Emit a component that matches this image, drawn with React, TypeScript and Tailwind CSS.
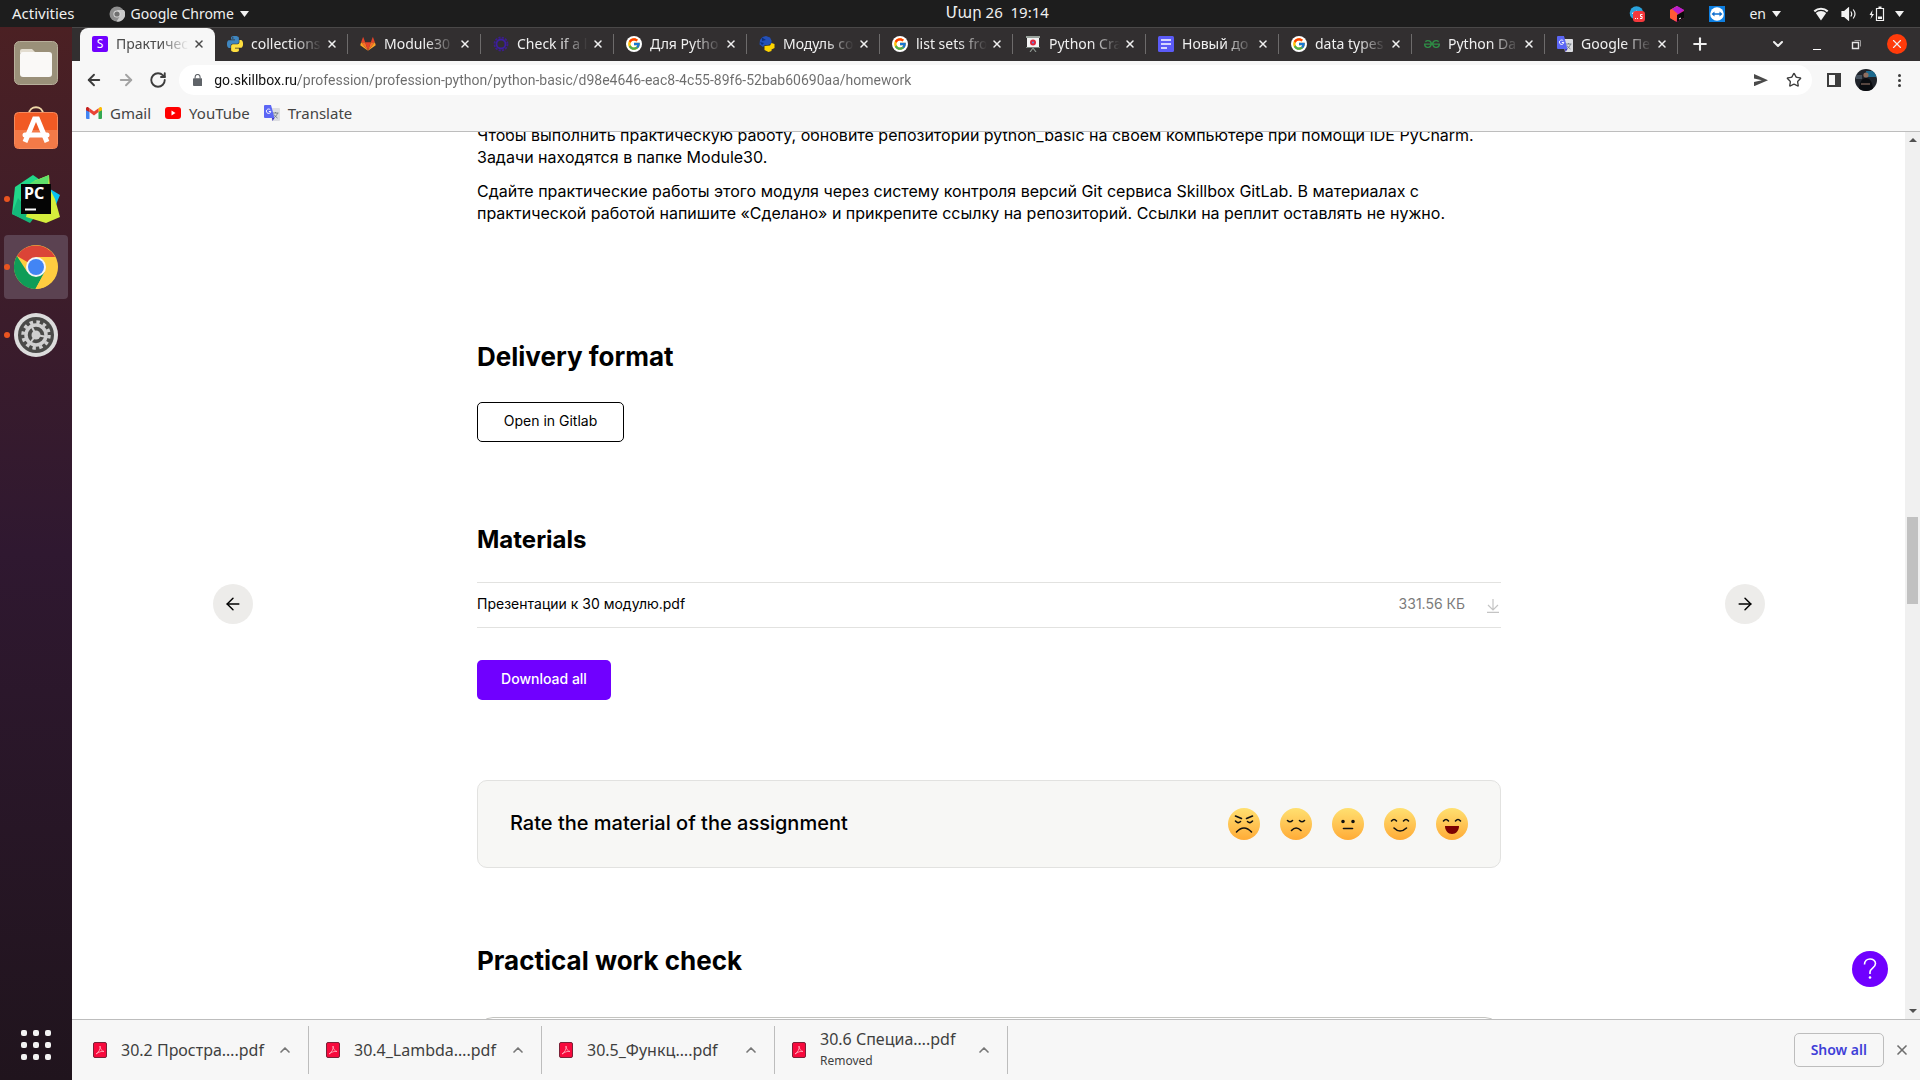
import type { ReactNode } from "react";
import { FcGoogle } from "react-icons/fc";
import { SiGeeksforgeeks } from "react-icons/si";
import { ArrowLeft, ArrowRight, ChevronDown, ChevronUp, Plus, RotateCw, Star, X } from "lucide-react";

/* ---------- small marks ---------- */

const PY_TOP =
  "M14.25.18l.9.2.73.26.59.3.45.32.34.34.25.34.16.33.1.3.04.26.02.2-.01.13V8.5l-.05.63-.13.55-.21.46-.26.38-.3.31-.33.25-.35.19-.35.14-.33.1-.3.07-.26.04-.21.02H8.77l-.69.05-.59.14-.5.22-.41.27-.33.32-.27.35-.2.36-.15.37-.1.35-.07.32-.04.27-.02.21v3.06H3.17l-.21-.03-.28-.07-.32-.12-.35-.18-.36-.26-.36-.36-.35-.46-.32-.59-.28-.73-.21-.88-.14-1.05-.05-1.23.06-1.22.16-1.04.24-.87.32-.71.36-.57.4-.44.42-.33.42-.24.4-.16.36-.1.32-.05.24-.01h.16l.06.01h8.16v-.83H6.18l-.01-2.75-.02-.37.05-.34.11-.31.17-.28.25-.26.31-.23.38-.2.44-.18.51-.15.58-.12.64-.1.71-.06.77-.04.84-.02 1.27.05zm-6.3 1.98l-.23.33-.08.41.08.41.23.34.33.22.41.09.41-.09.33-.22.23-.34.08-.41-.08-.41-.23-.33-.33-.22-.41-.09-.41.09z";
const PY_BOTTOM =
  "M21.04 6.11l.28.06.32.12.35.18.36.27.36.35.35.47.32.59.28.73.21.88.14 1.04.05 1.23-.06 1.23-.16 1.04-.24.86-.32.71-.36.57-.4.45-.42.33-.42.24-.4.16-.36.09-.32.05-.24.02-.16-.01h-8.22v.82h5.84l.01 2.76.02.36-.05.34-.11.31-.17.29-.25.25-.31.24-.38.2-.44.17-.51.15-.58.13-.64.09-.71.07-.77.04-.84.01-1.27-.04-1.07-.14-.9-.2-.73-.25-.59-.3-.45-.33-.34-.34-.25-.34-.16-.33-.1-.3-.04-.25-.02-.2.01-.13v-5.34l.05-.64.13-.54.21-.46.26-.38.3-.32.33-.24.35-.2.35-.14.33-.1.3-.06.26-.04.21-.02.13-.01h5.84l.69-.05.59-.14.5-.21.41-.28.33-.32.27-.35.2-.36.15-.36.1-.35.07-.32.04-.28.02-.21V6.07h2.09l.14.01z";

const PythonMark = () => (
  <svg viewBox="0 0 24 24" className="size-4">
    <path d={PY_TOP} fill="#3f86bf" />
    <path d={PY_BOTTOM} fill="#ffdf3f" />
  </svg>
);

const PythonClubMark = () => (
  <svg viewBox="0 0 16 16" className="size-4">
    <path d="M1 4 3.500 1 7 0l4 1.500 1.500 3v3L9 9H6L4 11 .5 8.500Z" fill="#2450b8" />
    <path d="M3 1.500 7 4 3 5ZM1 6l4 1-2 2Z" fill="#0b2f7d" />
    <path d="M5.500 10 11 9.500l1.500-2.500 3 1V12l-3 1.500V15l-3 1-4-2Z" fill="#ffd500" />
  </svg>
);

const GitlabMark = () => (
  <svg viewBox="0 0 18 16" className="h-4 w-4.5">
    <path d="M9 15.500 12.200 6H5.800Z" fill="#e24329" />
    <path d="M9 15.500 5.800 6H1.300ZM9 15.500 12.200 6h4.500Z" fill="#fc6d26" />
    <path d="M1.300 6 .4 8.900c-.1.300 0 .6.200.8L9 15.500ZM16.700 6l.9 2.900c.1.300 0 .6-.2.800L9 15.500Z" fill="#fca326" />
    <path d="M1.300 6h4.500L3.900.7c-.1-.3-.6-.3-.7 0ZM16.700 6h-4.500L14.100.7c.1-.3.600-.3.700 0Z" fill="#e24329" />
  </svg>
);

const SkillboxMark = () => (
  <span className="flex size-4 items-center justify-center rounded-xs bg-[#7000ff] text-xs text-white">S</span>
);

const GearMark = () => (
  <svg viewBox="0 0 16 16" className="size-4" fill="none">
    <circle cx="8" cy="8" r="4.500" stroke="#3c1fa0" strokeWidth="1.800" />
    <circle cx="8" cy="8" r="6.500" stroke="#3c1d8c" strokeWidth="1.800" strokeDasharray="2.200 1.200" />
  </svg>
);

const GoogleMark = () => (
  <span className="flex size-4 items-center justify-center rounded-full bg-white">
    <FcGoogle className="size-3.5" />
  </span>
);

const BoardMark = () => (
  <svg viewBox="0 0 16 16" className="size-4">
    <path d="M1 0h14v2H1z" fill="#9aa39d" />
    <path d="M2 2h12v9H2z" fill="#f4f4f4" />
    <path d="M1 11h14v1H1z" fill="#7b837d" />
    <circle cx="8" cy="6.500" r="3" fill="#e0263c" />
    <circle cx="8" cy="6.500" r="1" fill="#5b8fe8" />
    <path d="m8 12-3 4M8 12l3 4" stroke="#8c948e" strokeWidth="1.200" />
  </svg>
);

const DocsMark = () => (
  <svg viewBox="0 0 16 16" className="size-4">
    <rect width="16" height="16" rx="1.500" fill="#5b5bf7" />
    <path d="M3 4h10M3 8h10M3 12h6" stroke="#fff" strokeWidth="1.600" />
  </svg>
);

const TranslateMark = () => (
  <svg viewBox="0 0 16 16" className="size-4">
    <path d="M6 3h9a1 1 0 0 1 1 1v11a1 1 0 0 1-1 1H8Z" fill="#dcdde1" />
    <path d="M8.500 8h6M11.500 7v1M13.500 8c-.5 2-2 4-4 5M10 9.500c.800 1.500 2 2.500 3.500 3.500" stroke="#6f7a85" strokeWidth=".9" fill="none" />
    <path d="M1 0h6l3.500 13H1a1 1 0 0 1-1-1V1a1 1 0 0 1 1-1Z" fill="#5b66f5" />
    <path d="M8 13h2.500L8.500 16Z" fill="#3b2fc0" />
    <path d="M6.300 4.800A2.200 2.200 0 1 0 6.800 6.500H4.800" stroke="#fff" strokeWidth="1" fill="none" />
  </svg>
);

const GmailMark = () => (
  <svg viewBox="0 0 16 12" className="w-4">
    <path d="M0 2v9a1 1 0 0 0 1 1h2.500V4.500Z" fill="#4285f4" />
    <path d="M16 2v9a1 1 0 0 1-1 1h-2.500V4.500Z" fill="#34a853" />
    <path d="M12.500 1.200V5L16 3.200V1.500C16 .2 14.500-.4 13.500.4Z" fill="#fbbc04" />
    <path d="M3.500 5V1.200L8 4.600l4.500-3.400V5L8 8.400Z" fill="#ea4335" />
    <path d="M0 1.500v1.700L3.500 5V1.200L2.500.4C1.500-.4 0 .2 0 1.500Z" fill="#c5221f" />
  </svg>
);

const YoutubeMark = () => (
  <svg viewBox="0 0 16 12" className="w-4">
    <rect width="16" height="12" rx="3" fill="#f00" />
    <path d="m6.500 3.500 4 2.500-4 2.500Z" fill="#fff" />
  </svg>
);

const Caret = () => (
  <svg viewBox="0 0 9 6" className="w-[9px] shrink-0">
    <path d="M0 0h9L4.500 6Z" fill="#f2f2f2" />
  </svg>
);

/* ---------- system bar ---------- */

function SystemBar() {
  return (
    <header className="flex h-[27px] shrink-0 items-center bg-[#1d1d1d] text-sm text-[#f0f0f0]">
      <button className="ml-3 text-[15px]">Activities</button>
      <button className="ml-[34px] flex flex-1 items-center gap-1.5">
        <svg viewBox="0 0 16 16" className="size-4">
          <circle cx="8" cy="8" r="7.500" fill="#8e8e8e" />
          <path d="M8 4h7a7.500 7.500 0 0 1-7.500 11.500L11 10Z" fill="#c9c9c9" />
          <circle cx="8" cy="8" r="3.600" fill="#d9d9d9" />
          <circle cx="8" cy="8" r="2.600" fill="#707070" />
        </svg>
        Google Chrome
        <Caret />
      </button>
      <time className="pb-0.5 text-[15px] whitespace-pre">Մար 26  19:14</time>
      <div className="ml-[18px] flex flex-1 items-center justify-end pr-4">
        <svg viewBox="0 0 16 16" className="mr-6 size-4">
          <circle cx="7.500" cy="7" r="6.800" fill="#2aa3dd" />
          <path d="M3 7.500 8 5" stroke="#fff" />
          <rect x="4" y="5" width="12" height="11" rx="3" fill="#f5383c" />
          <path d="M6 12.500h1M8 12.500h1M13.500 8.500h-2v2h1.600v2H11" stroke="#fff" fill="none" />
        </svg>
        <svg viewBox="0 0 16 16" className="mr-6 size-4">
          <path d="m8 0 7 4v8l-7 4-7-4V4Z" fill="#e0218a" />
          <path d="m1 4 7-4 1 7-2 8.500L1 12Z" fill="#ff5a36" />
          <path d="m8 0 7 4-6 4-6-5Z" fill="#b81fd0" />
          <path d="m15 5v7l-7 4V9Z" fill="#0a0a0a" />
          <path d="m10 13 2-1" stroke="#fff" />
        </svg>
        <svg viewBox="0 0 16 16" className="mr-6 size-4">
          <rect width="16" height="16" fill="#0e7fe1" />
          <circle cx="8" cy="8" r="6.800" fill="#fff" />
          <path d="m2.500 8 3-2.500v1.700h5V5.500l3 2.500-3 2.500V8.800h-5v1.700Z" fill="#0e6fd0" />
        </svg>
        <button className="mr-8 flex items-center gap-1.5">
          en
          <Caret />
        </button>
        <button aria-label="System menu" className="flex items-center">
          <svg viewBox="0 0 16 14" className="mr-3 w-4">
            <path d="M.6 3.500a11 11 0 0 1 14.800 0L14 5.300a8.500 8.500 0 0 0-12 0Z" fill="#f2f2f2" />
            <path d="M2.800 6.100a7.800 7.800 0 0 1 10.400 0L8 13.500Z" fill="#f2f2f2" />
          </svg>
          <svg viewBox="0 0 16 14" className="mr-3 w-4" fill="none" stroke="#f2f2f2" strokeWidth="1.200">
            <path d="M1 4.500h2.500L7.500 1v12L3.500 9.500H1Z" fill="#f2f2f2" />
            <path d="M9.800 4.500q1.800 2.500 0 5M12.200 2.500q3.600 4.500 0 9" />
          </svg>
          <svg viewBox="0 0 16 16" className="mr-2.5 size-4">
            <path d="M3.500 4 .5 9H2.500l-1 4 3.500-5H3Z" fill="#f2f2f2" />
            <path d="M7.500 2.500h7v12h-7z" fill="none" stroke="#f2f2f2" strokeWidth="1.200" />
            <path d="M9.500.500h3v2h-3zM9 10.500h4V13H9z" fill="#f2f2f2" />
          </svg>
          <Caret />
        </button>
      </div>
    </header>
  );
}

/* ---------- dock ---------- */

const FilesIcon = () => (
  <svg viewBox="0 0 44 44" className="size-11">
    <rect x=".5" y=".5" width="43" height="43" rx="5" fill="#9a9079" stroke="#b8af9b" />
    <path d="M6 10a2 2 0 0 1 2-2h10l4 4H6Z" fill="#e3ddd0" />
    <rect x="6" y="11" width="32" height="25" rx="3" fill="#faf9f7" />
  </svg>
);

const SoftwareIcon = () => (
  <svg viewBox="0 4 44 44" className="size-11 overflow-visible">
    <path d="M15 9c0-9 14-9 14 0" fill="none" stroke="#f0d8a8" strokeWidth="1.800" />
    <rect x=".5" y="7.500" width="43" height="36" rx="4" fill="#f15a24" stroke="#f58a5d" />
    <path d="M1 25h42v14a4 4 0 0 1-4 4H5a4 4 0 0 1-4-4Z" fill="#f37a48" />
    <path d="m11 37 9.500-23h3L33 37" fill="none" stroke="#fff" strokeWidth="5" />
    <path d="M11 30h22" stroke="#fff" strokeWidth="5" strokeLinecap="round" />
  </svg>
);

const PycharmIcon = () => (
  <svg viewBox="0 0 48 48" className="size-12">
    <path d="M3 12 21 0l10 7-13 40L0 39Z" fill="#21d789" />
    <path d="m0 39 6-16 16 20-4 5Z" fill="#14b87a" />
    <path d="m38 14 10 6-5 12-9-4Z" fill="#07c3f2" />
    <path d="m22 6 15-6 1 14 5 10 5 18-14 6-20-6Z" fill="#d5ee3c" />
    <path d="M20 7 37 0l-1 12H14Z" fill="#5fe06a" />
    <rect x="9" y="9" width="30" height="30" fill="#050505" />
    <path d="M13 34.500h11" stroke="#fff" strokeWidth="2" />
    <text x="12" y="24" fontSize="16" fontWeight="700" fill="#fff" fontFamily="Noto Sans, sans-serif">
      PC
    </text>
  </svg>
);

const ChromeIcon = () => (
  <svg viewBox="0 0 44 44" className="size-11">
    <circle cx="22" cy="22" r="22" fill="#ffcd40" />
    <path d="M22 22 2.900 11A22 22 0 0 1 41.100 12H22Z" fill="#db4437" />
    <path d="M2.900 11A22 22 0 0 0 21.500 44l9.200-17L13.300 27Z" fill="#0f9d58" />
    <path d="M22 12h19A22 22 0 0 1 21.500 44l9.200-17Z" fill="#ffcd40" />
    <circle cx="22" cy="22" r="10" fill="#f5f5f5" />
    <circle cx="22" cy="22" r="8" fill="#4285f4" />
  </svg>
);

const SettingsIcon = () => (
  <svg viewBox="0 0 44 44" className="size-11">
    <circle cx="22" cy="22" r="22" fill="#dcdcdc" />
    <circle cx="22" cy="22" r="18" fill="#4a4a48" />
    <circle cx="22" cy="22" r="13" fill="none" stroke="#cfcfcf" strokeWidth="3.500" strokeDasharray="3.400 3.407" />
    <circle cx="22" cy="22" r="10" fill="none" stroke="#cfcfcf" strokeWidth="3.500" />
    <circle cx="22" cy="22" r="4.500" fill="#cfcfcf" />
    <path d="m22 22 8.500 1.500M22 22l-5.500 7.500M22 22l-4-8" stroke="#cfcfcf" strokeWidth="2" />
  </svg>
);

const dockItems: { name: string; icon: ReactNode; running: boolean; active: boolean }[] = [
  { name: "Files", icon: <FilesIcon />, running: false, active: false },
  { name: "Ubuntu Software", icon: <SoftwareIcon />, running: false, active: false },
  { name: "PyCharm", icon: <PycharmIcon />, running: true, active: false },
  { name: "Google Chrome", icon: <ChromeIcon />, running: true, active: true },
  { name: "Settings", icon: <SettingsIcon />, running: true, active: false },
];

function Dock() {
  return (
    <nav className="flex w-[72px] shrink-0 flex-col items-center bg-linear-to-b from-[#4b2023] via-[#2f1830] to-[#20141d] pt-1">
      <div className="flex flex-col gap-1">
        {dockItems.map((item) => (
          <button
            key={item.name}
            aria-label={item.name}
            className={
              item.active
                ? "relative flex size-16 items-center justify-center rounded-sm bg-[#5b4251]"
                : "relative flex size-16 items-center justify-center rounded-sm"
            }
          >
            {item.running && <span className="absolute left-0 size-1.5 rounded-full bg-[#e95420]" />}
            {item.icon}
          </button>
        ))}
      </div>
      <button aria-label="Show applications" className="mt-auto mb-5 grid grid-cols-3 gap-1.5">
        {Array.from({ length: 9 }, (_, i) => (
          <span key={i} className="size-1.5 rounded-xs bg-[#f3f3f3]" />
        ))}
      </button>
    </nav>
  );
}

/* ---------- browser chrome ---------- */

const tabs: { title: string; icon: ReactNode }[] = [
  { title: "Практичес", icon: <SkillboxMark /> },
  { title: "collections", icon: <PythonMark /> },
  { title: "Module30", icon: <GitlabMark /> },
  { title: "Check if a l", icon: <GearMark /> },
  { title: "Для Pytho", icon: <GoogleMark /> },
  { title: "Модуль co", icon: <PythonClubMark /> },
  { title: "list sets fro", icon: <GoogleMark /> },
  { title: "Python Cra", icon: <BoardMark /> },
  { title: "Новый до", icon: <DocsMark /> },
  { title: "data types", icon: <GoogleMark /> },
  { title: "Python Da", icon: <SiGeeksforgeeks className="size-4 text-[#2f8d46]" /> },
  { title: "Google Пе", icon: <TranslateMark /> },
];

function TabStrip() {
  return (
    <div className="flex h-[34px] shrink-0 border-t border-[#4a4848] bg-[#322f30] pl-2 text-[#f0f0f0]">
      {tabs.map((tab, i) => (
        <div
          key={tab.title}
          className={
            i === 0
              ? "relative flex w-[135px] shrink-0 items-center rounded-t-lg bg-[#f7f7f7] pr-2 pb-0.5 pl-3 text-[#4a4a4a]"
              : "relative flex w-[133px] shrink-0 items-center pr-2 pb-0.5 pl-3"
          }
        >
          <button className="flex min-w-0 flex-1 items-center gap-2 text-left text-sm">
            <span className="flex w-4 shrink-0 justify-center">{tab.icon}</span>
            <span className="flex-1 overflow-hidden whitespace-nowrap [mask-image:linear-gradient(to_right,black_60%,transparent)]">
              {tab.title}
            </span>
          </button>
          <button aria-label={"Close tab " + tab.title} className="ml-0.5 p-0.5">
            <X className="size-3" strokeWidth={3} />
          </button>
          {i > 0 && <span className="absolute top-1.5 right-0 h-5 w-px bg-[#6d6b6b]" />}
        </div>
      ))}
      <button aria-label="New tab" className="ml-3 self-center pb-0.5">
        <Plus className="size-5" strokeWidth={2.5} />
      </button>
      <div className="ml-auto flex items-center gap-[23px] pr-[13px] pb-0.5">
        <button aria-label="Search tabs">
          <ChevronDown className="size-4" strokeWidth={3} />
        </button>
        <button aria-label="Minimize" className="flex size-4 items-end justify-center pb-0.5">
          <span className="h-px w-2 bg-white" />
        </button>
        <button aria-label="Restore">
          <svg viewBox="0 0 16 16" className="size-4" fill="none" stroke="#e6e6e6">
            <path d="M4.500 6.500h6v6h-6z" strokeWidth="1.400" />
            <path d="M6.500 4.500h6v6" stroke="#9b9999" />
          </svg>
        </button>
        <button aria-label="Close window" className="flex size-5 items-center justify-center rounded-full bg-[#ff3b0a]">
          <X className="size-3.5" strokeWidth={2} />
        </button>
      </div>
    </div>
  );
}

function Toolbar() {
  return (
    <div className="flex h-[38px] shrink-0 items-center bg-[#f7f7f7] pr-[15px] pl-[13px] text-[#3c3c3c]">
      <button aria-label="Back">
        <ArrowLeft className="size-[18px]" strokeWidth={2.5} />
      </button>
      <button aria-label="Forward" className="ml-3.5 text-[#a3a3a3]">
        <ArrowRight className="size-[18px]" strokeWidth={2.5} />
      </button>
      <button aria-label="Reload" className="ml-3.5">
        <RotateCw className="size-[18px]" strokeWidth={2.5} />
      </button>
      <div className="ml-3 flex h-[30px] flex-1 items-center rounded-full bg-white pr-2.5 pl-3.5">
        <svg viewBox="0 0 10 13" className="h-3 shrink-0">
          <rect y="4.500" width="10" height="8.500" rx="1" fill="#5f6368" />
          <path d="M2.300 5V3.200a2.700 2.700 0 0 1 5.400 0V5" fill="none" stroke="#5f6368" strokeWidth="1.200" />
        </svg>
        <input
          aria-label="Address"
          defaultValue="go.skillbox.ru/profession/profession-python/python-basic/d98e4646-eac8-4c55-89f6-52bab60690aa/homework"
          className="ml-3 min-w-0 flex-1 bg-[linear-gradient(90deg,#101010_84px,#6c6c6c_84px)] bg-clip-text font-[Roboto,sans-serif] text-sm text-transparent outline-none"
        />
        <button aria-label="Share">
          <svg viewBox="0 0 16 14" className="w-3.5">
            <path d="M0 0 16 7 0 14V9l9-2-9-2Z" fill="#4a4a4a" />
          </svg>
        </button>
        <button aria-label="Bookmark this tab" className="ml-[18px]">
          <Star className="size-4" strokeWidth={2} />
        </button>
      </div>
      <button aria-label="Side panel" className="ml-[15px]">
        <svg viewBox="0 0 14 14" className="size-3.5">
          <path d="M0 0h14v14H0zM2 2v10h6V2Z" fillRule="evenodd" fill="#3c3c3c" />
        </svg>
      </button>
      <button aria-label="Profile" className="ml-3.5">
        <svg viewBox="0 0 22 22" className="size-[22px] rounded-full">
          <path d="M0 0h22v22H0z" fill="#20242b" />
          <path d="M11 2h10v6H12Z" fill="#1d6a8e" />
          <path d="M1 6h6v4H1z" fill="#44505c" />
          <path d="M4 22c0-9 3-13 7-13s7 4 7 13Z" fill="#0a0c10" />
          <circle cx="11" cy="6" r="2.600" fill="#8f6f60" />
          <path d="M6 15h9" stroke="#a17f6e" strokeWidth="1.200" />
        </svg>
      </button>
      <button aria-label="Menu" className="ml-3 flex w-4 flex-col items-center gap-0.5 pl-1">
        <span className="size-[3px] rounded-full bg-[#3c3c3c]" />
        <span className="size-[3px] rounded-full bg-[#3c3c3c]" />
        <span className="size-[3px] rounded-full bg-[#3c3c3c]" />
      </button>
    </div>
  );
}

const bookmarks: { label: string; icon: ReactNode }[] = [
  { label: "Gmail", icon: <GmailMark /> },
  { label: "YouTube", icon: <YoutubeMark /> },
  { label: "Translate", icon: <TranslateMark /> },
];

function Bookmarks() {
  return (
    <div className="flex h-[33px] shrink-0 items-center gap-3.5 border-b border-[#bdbdbd] bg-[#f7f7f7] pb-1 pl-3.5 text-[15px] text-[#444]">
      {bookmarks.map((b) => (
        <a key={b.label} href="#" className="flex items-center gap-2">
          {b.icon}
          {b.label}
        </a>
      ))}
    </div>
  );
}

/* ---------- page ---------- */

const faces: { label: string; features: ReactNode }[] = [
  {
    label: "Terrible",
    features: <path d="m7.500 8 6 2.500M24.500 8l-6 2.500M7.500 13q2.500 3 5 .500M24.500 13q-2.500 3-5 .500M8.500 24q7.500-8 15 0" />,
  },
  { label: "Bad", features: <path d="M7.500 12.500q2.500 2.500 5 0M19.500 12.500q2.500 2.500 5 0M11.500 22.500q4.500-5 9.500 0" /> },
  {
    label: "Okay",
    features: (
      <>
        <circle cx="11" cy="13.500" r="1" fill="#111" />
        <circle cx="21" cy="13.500" r="1" fill="#111" />
        <path d="M11.500 20.500h9" />
      </>
    ),
  },
  { label: "Good", features: <path d="M7.500 13q2.500-3 5 0M19.500 13q2.500-3 5 0M10 20q6 6 12.500 0" /> },
  {
    label: "Great",
    features: (
      <>
        <path d="M7.500 13q2.500-3 5 0M19.500 13q2.500-3 5 0" />
        <path d="M9 18h14c0 4.500-3 8-7 8s-7-3.500-7-8Z" fill="#7d0000" stroke="none" />
      </>
    ),
  },
];

function Rating() {
  return (
    <section className="mt-20 flex h-[88px] items-center justify-between rounded-[10px] border border-[#e2e2e0] bg-[#f7f7f5] px-8">
      <h3 className="pb-0.5 text-xl font-medium">Rate the material of the assignment</h3>
      <div className="flex gap-5">
        {faces.map((face) => (
          <button
            key={face.label}
            aria-label={face.label}
            className="size-8 rounded-full bg-linear-to-b from-[#ffe070] to-[#ffab35]"
          >
            <svg viewBox="0 0 32 32" fill="none" stroke="#111" strokeWidth="1.600" strokeLinecap="round">
              {face.features}
            </svg>
          </button>
        ))}
      </div>
    </section>
  );
}

function RoundButton({ label, children }: { label: string; children: ReactNode }) {
  return (
    <button
      aria-label={label}
      className="mt-[452px] flex size-10 shrink-0 items-center justify-center rounded-full bg-[#edecea] text-black"
    >
      {children}
    </button>
  );
}

function Page() {
  return (
    <div className="relative flex min-h-0 flex-1 bg-white">
      <main className="flex min-w-0 flex-1 items-start justify-between overflow-hidden pr-[140px] pl-[141px] font-[Inter,'Noto_Sans',sans-serif] text-black">
        <RoundButton label="Previous">
          <ArrowLeft className="size-5" strokeWidth={1.75} />
        </RoundButton>
        <article className="-mt-2 w-full max-w-[1024px]">
          <div className="flex flex-col gap-3 text-base leading-[22px]">
            <p>
              Чтобы выполнить практическую работу, обновите репозиторий python_basic на своём компьютере при помощи IDE
              PyCharm.
              <br />
              Задачи находятся в папке Module30.
            </p>
            <p>
              Сдайте практические работы этого модуля через систему контроля версий Git сервиса Skillbox GitLab. В
              материалах с<br />
              практической работой напишите «Сделано» и прикрепите ссылку на репозиторий. Ссылки на реплит оставлять не
              нужно.
            </p>
          </div>
          <h2 className="mt-[115px] text-[26px] leading-9 font-bold">Delivery format</h2>
          <button className="mt-[27px] flex h-10 min-w-[147px] items-center justify-center rounded-[5px] border border-black px-6 pb-0.5 text-sm">
            Open in Gitlab
          </button>
          <h3 className="mt-[82px] text-2xl leading-8 font-bold">Materials</h3>
          <a
            href="#"
            className="mt-[26px] flex h-[46px] items-center border-y border-[#e2e2e0] pr-0.5 pb-0.5 text-sm"
          >
            Презентации к 30 модулю.pdf
            <span className="mr-[22px] ml-auto text-[#7b7b7b]">331.56 КБ</span>
            <svg viewBox="0 0 12 14" className="mt-1 w-3" fill="none" stroke="#c4c4c4" strokeWidth="1.200">
              <path d="M6 0v11M1 6l5 5 5-5M0 13.400h12" />
            </svg>
          </a>
          <button className="mt-8 flex h-10 min-w-[134px] items-center justify-center rounded-[5px] bg-[#7000ff] px-6 pb-0.5 text-sm font-medium text-white">
            Download all
          </button>
          <Rating />
          <h2 className="mt-[75px] text-[26px] leading-9 font-bold">Practical work check</h2>
          <div className="mt-[38px] h-40 rounded-2xl border border-[#c4c4c0]" />
        </article>
        <RoundButton label="Next">
          <ArrowRight className="size-5" strokeWidth={1.75} />
        </RoundButton>
      </main>
      <button
        aria-label="Help"
        className="absolute right-8 bottom-8 flex size-9 items-center justify-center rounded-full bg-[#7000ff]"
      >
        <svg viewBox="0 0 14 22" className="h-[22px]" fill="none" stroke="#fff" strokeWidth="1.600">
          <path d="M1.500 6.500C1.500-1 12.500-.5 12.500 5.500c0 4.500-5.500 4.500-5.500 8.500v2" />
          <circle cx="7" cy="19.500" r="1.300" fill="#fff" stroke="none" />
        </svg>
      </button>
      <div className="flex w-[15px] shrink-0 flex-col items-center bg-[#f0f0f0] py-1.5">
        <svg viewBox="0 0 8 4" className="w-2">
          <path d="M0 4h8L4 0Z" fill="#505050" />
        </svg>
        <span className="mt-[375px] h-[87px] w-[11px] bg-[#c1c1c1]" />
        <svg viewBox="0 0 8 4" className="mt-auto w-2">
          <path d="M0 0h8L4 4Z" fill="#505050" />
        </svg>
      </div>
    </div>
  );
}

/* ---------- downloads ---------- */

const downloads = [
  { name: "30.2 Простра….pdf", note: "" },
  { name: "30.4_Lambda….pdf", note: "" },
  { name: "30.5_Функц….pdf", note: "" },
  { name: "30.6 Специа….pdf", note: "Removed" },
];

function Downloads() {
  return (
    <footer className="flex h-[61px] shrink-0 items-center border-t border-[#bdbdbd] bg-[#f7f7f7] pr-2.5 text-[#3f3f3f]">
      {downloads.map((d) => (
        <div
          key={d.name}
          className="flex h-12 w-[233px] shrink-0 items-center border-r border-[#bdbdbd] pr-[15px] pl-[17px] first:w-[237px] first:pl-[21px]"
        >
          <svg viewBox="0 0 14 16" className="w-3.5 shrink-0">
            <rect x=".5" y=".5" width="13" height="15" rx="1.500" fill="#f70a3d" stroke="#7a2238" />
            <path d="M3 12c3-2 4.500-5 4-8 .3 3 1.500 5 4 5.500-3-.5-5 .5-8 2.500Z" fill="none" stroke="#ffb3c0" strokeWidth=".8" />
          </svg>
          <button className="ml-3.5 text-left text-base leading-5 whitespace-nowrap">
            {d.name}
            {d.note && <span className="block pt-0.5 text-xs leading-5">{d.note}</span>}
          </button>
          <button aria-label={"Options for " + d.name} className="ml-auto text-[#777]">
            <ChevronUp className="size-4" strokeWidth={2.5} />
          </button>
        </div>
      ))}
      <button className="ml-auto h-[34px] rounded-[5px] border border-[#bdbdbd] px-4 text-sm font-semibold text-[#3f3fd8]">
        Show all
      </button>
      <button aria-label="Close downloads bar" className="ml-2.5 text-[#6e6e6e]">
        <X className="size-4" strokeWidth={2.5} />
      </button>
    </footer>
  );
}

export default function App() {
  return (
    <div className="flex h-screen flex-col overflow-hidden font-['Noto_Sans','DejaVu_Sans',sans-serif]">
      <SystemBar />
      <div className="flex min-h-0 flex-1">
        <Dock />
        <div className="flex min-w-0 flex-1 flex-col">
          <TabStrip />
          <Toolbar />
          <Bookmarks />
          <Page />
          <Downloads />
        </div>
      </div>
    </div>
  );
}
